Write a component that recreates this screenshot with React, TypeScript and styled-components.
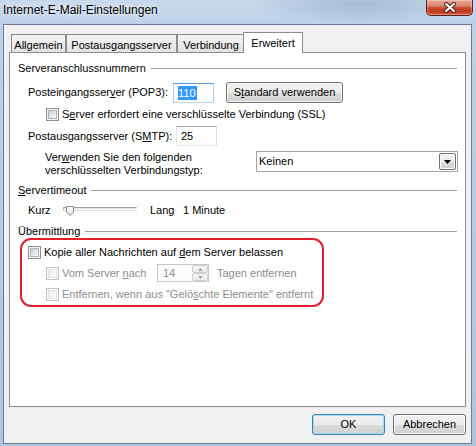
import React from "react";
import styled, { createGlobalStyle } from "styled-components";

const GlobalStyle = createGlobalStyle`
  html, body { margin: 0; padding: 0; }
  body {
    width: 476px; height: 446px; overflow: hidden; background: #b7cce5;
    font-family: "Liberation Sans", Arial, sans-serif; font-size: 11px; color: #000;
  }
  *, *::before, *::after { box-sizing: border-box; }
`;

const Window = styled.div`
  width: 476px;
  height: 446px;
  display: flex;
  flex-direction: column;
  background:
    radial-gradient(ellipse 150px 28px at 360px 4px, rgba(110, 135, 170, 0.35), transparent 70%),
    linear-gradient(180deg, #c6d8ec 0px, #bcd1e9 24px, #adc5e1 446px);
`;

const TitleBar = styled.div`
  height: 24px;
  flex-shrink: 0;
  display: flex;
  align-items: flex-start;
  padding-left: 3px;
`;

const Title = styled.div`
  margin-top: 3px;
  font-size: 12px;
  line-height: 14px;
  color: #000;
  text-shadow: 0 0 6px rgba(255, 255, 255, 0.95), 0 0 10px rgba(255, 255, 255, 0.8);
`;

const CloseButton = styled.div`
  margin-left: auto;
  margin-right: 3px;
  width: 47px;
  height: 16px;
  border: 1px solid #5a2318;
  border-top: none;
  border-radius: 0 0 5px 5px;
  background: linear-gradient(180deg, #e9a697 0%, #db8570 40%, #c84a2e 52%, #bf3a1f 75%, #d65d3e 100%);
  box-shadow: inset 0 0 0 1px rgba(255, 255, 255, 0.3);
  display: flex;
  align-items: center;
  justify-content: center;
`;

const Client = styled.div`
  flex: 1;
  margin: 0 4px 2px 3px;
  border: 1px solid #6e7d8e;
  background: #f0f0f0;
  padding: 7px 5px 0 5px;
  display: flex;
  flex-direction: column;
`;

const TabStrip = styled.div`
  display: flex;
  align-items: flex-end;
  height: 20px;
  padding-left: 2px;
`;

const Tab = styled.div<{ $w: number; $active?: boolean }>`
  width: ${(p) => p.$w}px;
  height: ${(p) => (p.$active ? 21 : 18)}px;
  margin: ${(p) => (p.$active ? "0 -2px -1px -2px" : "0")};
  border: 1px solid #898c95;
  border-bottom: none;
  background: ${(p) =>
    p.$active ? "#ffffff" : "linear-gradient(180deg, #f4f4f4 0%, #ececec 50%, #e3e3e3 100%)"};
  position: relative;
  z-index: ${(p) => (p.$active ? 2 : 1)};
  display: flex;
  align-items: center;
  justify-content: center;
  line-height: 13px;
  white-space: nowrap;
  padding-top: ${(p) => (p.$active ? 0 : 3)}px;
`;

const Panel = styled.div`
  height: 355px;
  border: 1px solid #898c95;
  background: #ffffff;
  padding: 8px 8px 0 8px;
  display: flex;
  flex-direction: column;
`;

const GroupHeader = styled.div<{ $mt: number }>`
  display: flex;
  height: 14px;
  line-height: 14px;
  margin-top: ${(p) => p.$mt}px;
  white-space: nowrap;
  &::after {
    content: "";
    flex: 1;
    height: 1px;
    margin: 7px 0 0 5px;
    background: #a0a0a0;
  }
`;

const Row = styled.div<{ $mt: number; $h: number; $indent?: number; $top?: boolean }>`
  display: flex;
  align-items: ${(p) => (p.$top ? "flex-start" : "center")};
  margin-top: ${(p) => p.$mt}px;
  height: ${(p) => p.$h}px;
  padding-left: ${(p) => p.$indent ?? 0}px;
  line-height: 13px;
  white-space: nowrap;
`;

const Label = styled.span<{ $w?: number; $ml?: number; $disabled?: boolean }>`
  display: inline-block;
  flex-shrink: 0;
  width: ${(p) => (p.$w ? `${p.$w}px` : "auto")};
  margin-left: ${(p) => p.$ml ?? 0}px;
  color: ${(p) => (p.$disabled ? "#8d8d8d" : "#000")};
  line-height: 13px;
`;

const TextBox = styled.div<{ $focused?: boolean }>`
  width: 41px;
  height: 20px;
  flex-shrink: 0;
  border: 1px solid;
  border-color: ${(p) =>
    p.$focused ? "#5b9ad6 #a9cbeb #bcd7f0 #a9cbeb" : "#abadb3 #dbdfe6 #e3e9ef #e2e3ea"};
  background: #fff;
  padding-left: 4px;
  display: flex;
  align-items: center;
  line-height: 14px;
`;

const Selected = styled.span`
  background: #3399ff;
  color: #fff;
  padding-right: 1px;
`;

const Button = styled.button<{ $w: number; $default?: boolean; $ml?: number }>`
  width: ${(p) => p.$w}px;
  height: 21px;
  flex-shrink: 0;
  margin-left: ${(p) => p.$ml ?? 0}px;
  padding: 0;
  font-family: "Liberation Sans", Arial, sans-serif;
  font-size: 11px;
  line-height: 13px;
  color: #000;
  border: 1px solid ${(p) => (p.$default ? "#3c7fb1" : "#707070")};
  border-radius: 3px;
  background: linear-gradient(180deg, #f2f2f2 0%, #ebebeb 50%, #dddddd 51%, #cfcfcf 100%);
  box-shadow: inset 0 0 0 1px ${(p) => (p.$default ? "#a6dcf6" : "rgba(252,252,252,0.9)")};
`;

const Check = styled.span<{ $disabled?: boolean; $ml?: number }>`
  position: relative;
  width: 13px;
  height: 13px;
  flex-shrink: 0;
  margin-left: ${(p) => p.$ml ?? 0}px;
  border: 1px solid ${(p) => (p.$disabled ? "#c2c2c2" : "#8f8f8f")};
  background: ${(p) => (p.$disabled ? "#fbfbfb" : "#f4f4f4")};
  &::after {
    content: "";
    position: absolute;
    left: 1px;
    top: 1px;
    width: 9px;
    height: 9px;
    border: 1px solid ${(p) => (p.$disabled ? "#e2e2e2" : "#b0b4b9")};
    background: ${(p) =>
      p.$disabled
        ? "linear-gradient(135deg, #ececec, #fbfbfb)"
        : "linear-gradient(135deg, #cdd0d4 0%, #e4e5e7 50%, #f8f8f8 100%)"};
  }
`;

const TwoLine = styled.div`
  width: 211px;
  flex-shrink: 0;
  line-height: 13px;
  white-space: nowrap;
`;

const Combo = styled.div`
  width: 202px;
  height: 21px;
  flex-shrink: 0;
  border: 1px solid #a5a5a5;
  background: #fff;
  display: flex;
  align-items: center;
  padding: 1px 1px 1px 2px;
`;

const ComboText = styled.span`
  flex: 1;
  line-height: 13px;
`;

const ComboButton = styled.span`
  width: 17px;
  height: 17px;
  border: 1px solid #707070;
  border-radius: 2px;
  background: linear-gradient(180deg, #f2f2f2 0%, #ebebeb 50%, #dddddd 51%, #cfcfcf 100%);
  box-shadow: inset 0 0 0 1px #fbfbfb;
  display: flex;
  align-items: center;
  justify-content: center;
`;

const Slider = styled.div`
  position: relative;
  width: 74px;
  height: 13px;
  flex-shrink: 0;
  padding-top: 3px;
`;

const Groove = styled.div`
  height: 3px;
  border-top: 1px solid #9c9c9c;
  border-left: 1px solid #9c9c9c;
  border-bottom: 1px solid #ffffff;
  border-right: 1px solid #ffffff;
  background: #e4e4e4;
  box-shadow: 0 1px 0 #d8d8d8;
`;

const Thumb = styled.svg`
  position: absolute;
  left: 3px;
  top: 2px;
`;

const Highlight = styled.div`
  margin-left: 2px;
  width: 304px;
  border: 2px solid #e3202c;
  border-radius: 11px;
  padding: 6px 0 4px 0;
  display: flex;
  flex-direction: column;
`;

const Spinner = styled.div`
  width: 52px;
  height: 18px;
  flex-shrink: 0;
  border: 1px solid #c8c8c8;
  background: #fcfcfc;
  display: flex;
  align-items: center;
  padding-left: 5px;
  color: #8d8d8d;
`;

const SpinValue = styled.span`
  flex: 1;
  line-height: 13px;
`;

const SpinButtons = styled.div`
  width: 16px;
  height: 100%;
  display: flex;
  flex-direction: column;
`;

const SpinBtn = styled.span`
  flex: 1;
  border: 1px solid #cfcfcf;
  border-radius: 2px;
  background: linear-gradient(180deg, #f7f7f7, #ececec);
  display: flex;
  align-items: center;
  justify-content: center;
`;

const Footer = styled.div`
  display: flex;
  justify-content: flex-end;
  gap: 8px;
  margin-top: 7px;
`;

const Arrow = ({ up, color }: { up?: boolean; color: string }) => (
  <svg width="5" height="3" viewBox="0 0 5 3">
    <path d={up ? "M0 3 L2.5 0 L5 3 Z" : "M0 0 L5 0 L2.5 3 Z"} fill={color} />
  </svg>
);

export default function App() {
  return (
    <>
      <GlobalStyle />
      <Window>
        <TitleBar>
          <Title>Internet-E-Mail-Einstellungen</Title>
          <CloseButton>
            <svg width="14" height="11" viewBox="0 0 14 11">
              <path d="M3 2 L11 9 M11 2 L3 9" stroke="#3a1e1a" strokeWidth="4" strokeLinecap="round" />
              <path d="M3 2 L11 9 M11 2 L3 9" stroke="#ffffff" strokeWidth="2.2" strokeLinecap="round" />
            </svg>
          </CloseButton>
        </TitleBar>
        <Client>
          <TabStrip>
            <Tab $w={55}>Allgemein</Tab>
            <Tab $w={111}>Postausgangsserver</Tab>
            <Tab $w={68}>Verbindung</Tab>
            <Tab $w={60} $active>
              Erweitert
            </Tab>
          </TabStrip>
          <Panel>
            <GroupHeader $mt={0}>Serveranschlussnummern</GroupHeader>
            <Row $mt={7} $h={21} $indent={10}>
              <Label $w={145}>
                Posteingangsser<u>v</u>er (POP3):
              </Label>
              <TextBox $focused>
                <Selected>110</Selected>
              </TextBox>
              <Button $w={117} $ml={12}>
                S<u>t</u>andard verwenden
              </Button>
            </Row>
            <Row $mt={5} $h={13} $indent={28}>
              <Check />
              <Label $ml={3}>
                S<u>e</u>rver erfordert eine verschlüsselte Verbindung (SSL)
              </Label>
            </Row>
            <Row $mt={5} $h={20} $indent={10}>
              <Label $w={148}>
                Postausgangsserver (S<u>M</u>TP):
              </Label>
              <TextBox>25</TextBox>
            </Row>
            <Row $mt={5} $h={26} $indent={27} $top>
              <TwoLine>
                Ver<u>w</u>enden Sie den folgenden
                <br />
                verschlüsselten Verbindungstyp:
              </TwoLine>
              <Combo>
                <ComboText>Keinen</ComboText>
                <ComboButton>
                  <svg width="7" height="4" viewBox="0 0 7 4">
                    <path d="M0 0 L7 0 L3.5 4 Z" fill="#000" />
                  </svg>
                </ComboButton>
              </Combo>
            </Row>
            <GroupHeader $mt={6}>
              <span>
                <u>S</u>ervertimeout
              </span>
            </GroupHeader>
            <Row $mt={7} $h={13} $indent={10} $top>
              <Label $w={35}>Kurz</Label>
              <Slider>
                <Groove />
                <Thumb width="9" height="10" viewBox="0 0 9 10">
                  <defs>
                    <linearGradient id="thumbFill" x1="0" y1="0" x2="0" y2="1">
                      <stop offset="0" stopColor="#fdfdfd" />
                      <stop offset="1" stopColor="#dedede" />
                    </linearGradient>
                  </defs>
                  <path d="M0.5 0.5 H7.5 V6 L4 9.5 L0.5 6 Z" fill="url(#thumbFill)" stroke="#8a8a8a" />
                </Thumb>
              </Slider>
              <Label $w={33} $ml={13}>
                Lang
              </Label>
              <Label>1 Minute</Label>
            </Row>
            <GroupHeader $mt={7}>Übermittlung</GroupHeader>
            <Highlight>
              <Row $mt={0} $h={13} $indent={6}>
                <Check />
                <Label $ml={3}>
                  Kopie aller Nachrichten auf <u>d</u>em Server belassen
                </Label>
              </Row>
              <Row $mt={5} $h={18} $indent={24}>
                <Check $disabled />
                <Label $ml={3} $w={95} $disabled>
                  Vom Server <u>n</u>ach
                </Label>
                <Spinner>
                  <SpinValue>14</SpinValue>
                  <SpinButtons>
                    <SpinBtn>
                      <Arrow up color="#a8a8a8" />
                    </SpinBtn>
                    <SpinBtn>
                      <Arrow color="#a8a8a8" />
                    </SpinBtn>
                  </SpinButtons>
                </Spinner>
                <Label $ml={8} $disabled>
                  Tagen entfernen
                </Label>
              </Row>
              <Row $mt={6} $h={13} $indent={24}>
                <Check $disabled />
                <Label $ml={3} $disabled>
                  Entfernen, wenn aus "Gelö<u>s</u>chte Elemente" entfernt
                </Label>
              </Row>
            </Highlight>
          </Panel>
          <Footer>
            <Button $w={73} $default>
              OK
            </Button>
            <Button $w={73}>Abbrechen</Button>
          </Footer>
        </Client>
      </Window>
    </>
  );
}
